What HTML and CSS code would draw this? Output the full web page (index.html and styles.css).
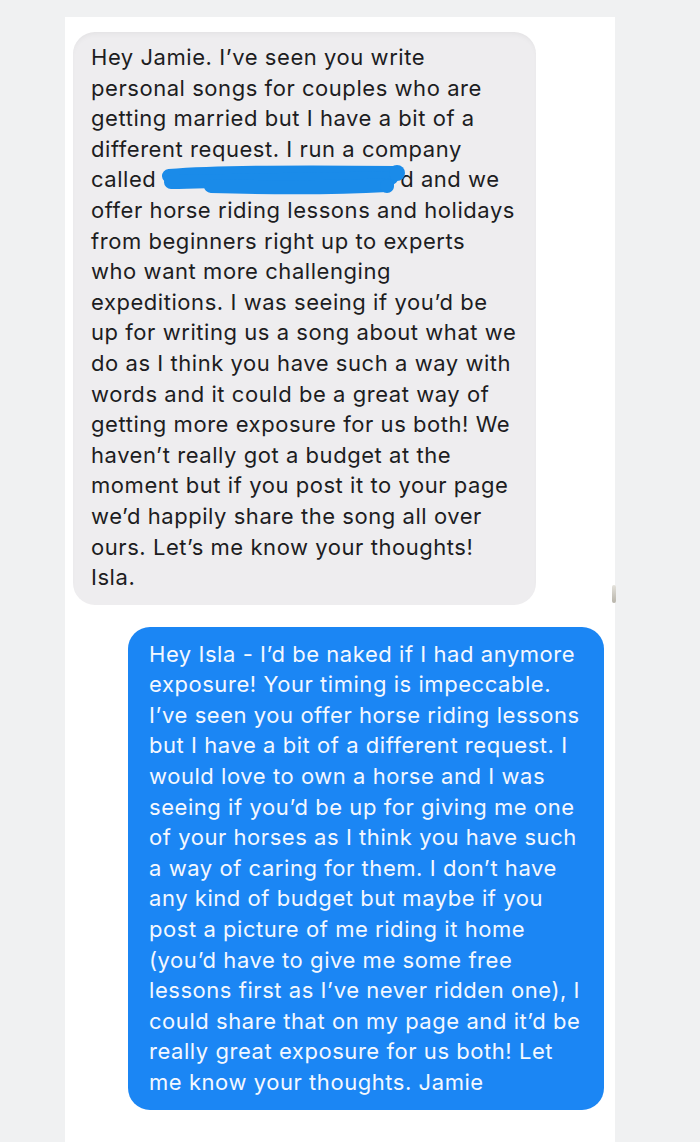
FILE: index.html
```html
<!DOCTYPE html>
<html lang="en">
<head>
    <meta charset="UTF-8">
    <meta name="viewport" content="width=device-width, initial-scale=1.0">
    <title>Messages</title>
    <link rel="stylesheet" href="styles.css">
</head>
<body>
    <div class="panel">
        <div class="thread">
            <div class="bubble incoming">
                Hey Jamie. I’ve seen you write<br>
                personal songs for couples who are<br>
                getting married but I have a bit of a<br>
                different request. I run a company<br>
                called <span class="redact"><svg viewBox="0 0 250 32" width="250" height="32"><path d="M8 13 C 60 9, 150 9, 234 10" /><path d="M10 19 C 80 17, 170 17, 230 15" /><path d="M50 23 C 120 25, 190 24, 226 22" /><circle cx="236" cy="10" r="8" /><circle cx="226" cy="23" r="7" /></svg></span>d and we<br>
                offer horse riding lessons and holidays<br>
                from beginners right up to experts<br>
                who want more challenging<br>
                expeditions. I was seeing if you’d be<br>
                up for writing us a song about what we<br>
                do as I think you have such a way with<br>
                words and it could be a great way of<br>
                getting more exposure for us both! We<br>
                haven’t really got a budget at the<br>
                moment but if you post it to your page<br>
                we’d happily share the song all over<br>
                ours. Let’s me know your thoughts!<br>
                Isla.
            </div>
            <div class="bubble outgoing">
                Hey Isla - I’d be naked if I had anymore<br>
                exposure! Your timing is impeccable.<br>
                I’ve seen you offer horse riding lessons<br>
                but I have a bit of a different request. I<br>
                would love to own a horse and I was<br>
                seeing if you’d be up for giving me one<br>
                of your horses as I think you have such<br>
                a way of caring for them. I don’t have<br>
                any kind of budget but maybe if you<br>
                post a picture of me riding it home<br>
                (you’d have to give me some free<br>
                lessons first as I’ve never ridden one), I<br>
                could share that on my page and it’d be<br>
                really great exposure for us both! Let<br>
                me know your thoughts. Jamie
            </div>
        </div>
        <span class="avatar-edge"></span>
    </div>
</body>
</html>
```

FILE: styles.css
```css
body {
    margin: 0;
    background-color: #f0f1f2;
    font-family: 'Inter', 'Liberation Sans', Arial, sans-serif;
}

.panel {
    position: relative;
    width: 550px;
    min-height: 1125px;
    margin: 17px 0 0 65px;
    padding-top: 15px;
    background-color: #fff;
    box-sizing: border-box;
}

.thread {
    display: flex;
    flex-direction: column;
    gap: 22px;
}

.bubble {
    font-size: 22px;
    line-height: 30.6px;
    letter-spacing: 0.55px;
    white-space: nowrap;
    border-radius: 22px;
    box-sizing: border-box;
}

.incoming {
    width: 463px;
    margin-left: 8px;
    padding: 10px 16px 12px 18px;
    background-color: #eeedef;
    color: #1d1d1f;
    box-shadow: inset 0 4px 6px -3px rgba(0, 0, 0, 0.06);
}

.outgoing {
    width: 476px;
    margin-left: 63px;
    padding: 12px 16px 12px 21px;
    background-color: #1b86f4;
    color: #f4f8ff;
}

.redact {
    display: inline-block;
    width: 237px;
    height: 22px;
    position: relative;
    vertical-align: middle;
}

.redact svg {
    position: absolute;
    left: -2px;
    top: -7px;
}

.redact path {
    fill: none;
    stroke: #1a8be9;
    stroke-width: 14;
    stroke-linecap: round;
}

.redact circle {
    fill: #1a8be9;
}

.avatar-edge {
    position: absolute;
    left: 547px;
    top: 568px;
    width: 4px;
    height: 18px;
    border-radius: 3px;
    background: linear-gradient(#e4e2dc, #b8b4aa);
}
```
